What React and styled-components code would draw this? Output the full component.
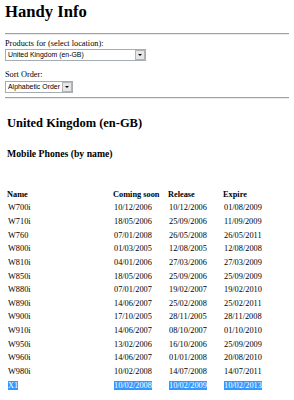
import React from "react";
import styled, { createGlobalStyle } from "styled-components";

const GlobalStyle = createGlobalStyle`
  html, body {
    margin: 0;
    background: #fff;
  }
  body {
    padding: 0 5px;
    font-family: "Liberation Serif", "Times New Roman", serif;
    font-size: 8.32px;
    color: #000;
  }
`;

const Title = styled.h1`
  margin: 2px 0 0;
  font-size: 16.64px;
  line-height: 19px;
  font-weight: bold;
`;

const Rule = styled.hr`
  margin: ${(p) => p.$top}px 0 0;
  height: 0;
  border: 0;
  border-top: 1px solid #a0a0a0;
  border-bottom: 1px solid #ececec;
`;

const FieldLabel = styled.label`
  display: block;
  margin-top: ${(p) => p.$top}px;
  line-height: 10px;
`;

const PickerWrap = styled.div`
  position: relative;
  width: ${(p) => p.$width}px;
  height: 12px;
  margin-top: ${(p) => p.$top}px;
`;

const Picker = styled.select`
  appearance: none;
  -webkit-appearance: none;
  display: block;
  box-sizing: border-box;
  width: 100%;
  height: 12px;
  margin: 0;
  padding: 0 0 0 2px;
  border: 1px solid #a5acb2;
  border-radius: 0;
  background: #fff;
  color: #000;
  font-family: "Liberation Sans", Arial, sans-serif;
  font-size: 6.93px;
  line-height: 10px;
  outline: none;
`;

/* the little grey dropdown button sitting over the select's right edge */
const PickerButton = styled.span`
  position: absolute;
  top: 1px;
  right: 1px;
  width: 8px;
  height: 8px;
  border: 1px solid #b4b4b4;
  background: #e6e6e6;
  display: flex;
  align-items: center;
  justify-content: center;
  pointer-events: none;

  &::after {
    content: "";
    width: 0;
    height: 0;
    border-left: 2px solid transparent;
    border-right: 2px solid transparent;
    border-top: 2px solid #000;
  }
`;

const Results = styled.section`
  padding-left: 2px;
`;

const Country = styled.h2`
  margin: 16.9px 0 0;
  font-size: 12.48px;
  line-height: 14.4px;
  font-weight: bold;
`;

const Category = styled.h3`
  margin: 17.8px 0 0;
  font-size: 9.73px;
  line-height: 11.2px;
  font-weight: bold;
`;

const Table = styled.table`
  margin-top: 28.4px;
  border-collapse: collapse;
  font-size: 8.32px;
`;

const HeadCell = styled.th`
  width: ${(p) => p.$width}px;
  padding: 0;
  text-align: left;
  font-weight: bold;
  line-height: 13.64px;
  white-space: nowrap;
`;

const Cell = styled.td`
  padding: 0 0 0 ${(p) => p.$indent || 0}px;
  line-height: 13.64px;
  white-space: nowrap;
`;

const Picked = styled.span`
  background: ${(p) => (p.$on ? "#3399ff" : "transparent")};
  color: ${(p) => (p.$on ? "#fff" : "inherit")};
`;

const phones = [
  ["W700i", "10/12/2006", "10/12/2006", "01/08/2009"],
  ["W710i", "18/05/2006", "25/09/2006", "11/09/2009"],
  ["W760", "07/01/2008", "26/05/2008", "26/05/2011"],
  ["W800i", "01/03/2005", "12/08/2005", "12/08/2008"],
  ["W810i", "04/01/2006", "27/03/2006", "27/03/2009"],
  ["W850i", "18/05/2006", "25/09/2006", "25/09/2009"],
  ["W880i", "07/01/2007", "19/02/2007", "19/02/2010"],
  ["W890i", "14/06/2007", "25/02/2008", "25/02/2011"],
  ["W900i", "17/10/2005", "28/11/2005", "28/11/2008"],
  ["W910i", "14/06/2007", "08/10/2007", "01/10/2010"],
  ["W950i", "13/02/2006", "16/10/2006", "25/09/2009"],
  ["W960i", "14/06/2007", "01/01/2008", "20/08/2010"],
  ["W980i", "10/02/2008", "14/07/2008", "14/07/2011"],
  ["X1", "10/02/2008", "10/02/2009", "10/02/2013"],
];

const Dropdown = ({ id, width, top, value, options }) => (
  <PickerWrap $width={width} $top={top}>
    <Picker id={id} defaultValue={value}>
      {options.map((o) => (
        <option key={o}>{o}</option>
      ))}
    </Picker>
    <PickerButton />
  </PickerWrap>
);

const App = () => {
  const selectedName = "X1";
  return (
    <>
      <GlobalStyle />
      <Title>Handy Info</Title>
      <Rule $top={12} />
      <form>
        <FieldLabel htmlFor="location" $top={3.5}>
          Products for (select location):
        </FieldLabel>
        <Dropdown
          id="location"
          width={141}
          top={0.5}
          value="United Kingdom (en-GB)"
          options={["United Kingdom (en-GB)"]}
        />
        <FieldLabel htmlFor="sort" $top={9.2}>
          Sort Order:
        </FieldLabel>
        <Dropdown
          id="sort"
          width={68}
          top={0.8}
          value="Alphabetic Order"
          options={["Alphabetic Order"]}
        />
      </form>
      <Rule $top={4} />
      <Results>
        <Country>United Kingdom (en-GB)</Country>
        <Category>Mobile Phones (by name)</Category>
        <Table>
          <thead>
            <tr>
              <HeadCell $width={106}>Name</HeadCell>
              <HeadCell $width={55}>Coming soon</HeadCell>
              <HeadCell $width={55}>Release</HeadCell>
              <HeadCell>Expire</HeadCell>
            </tr>
          </thead>
          <tbody>
            {phones.map(([name, soon, release, expire]) => {
              const on = name === selectedName;
              return (
                <tr key={name}>
                  <Cell $indent={1}>
                    <Picked $on={on}>{name}</Picked>
                  </Cell>
                  <Cell $indent={1}>
                    <Picked $on={on}>{soon}</Picked>
                  </Cell>
                  <Cell $indent={1}>
                    <Picked $on={on}>{release}</Picked>
                  </Cell>
                  <Cell $indent={1}>
                    <Picked $on={on}>{expire}</Picked>
                  </Cell>
                </tr>
              );
            })}
          </tbody>
        </Table>
      </Results>
    </>
  );
};

export default App;
